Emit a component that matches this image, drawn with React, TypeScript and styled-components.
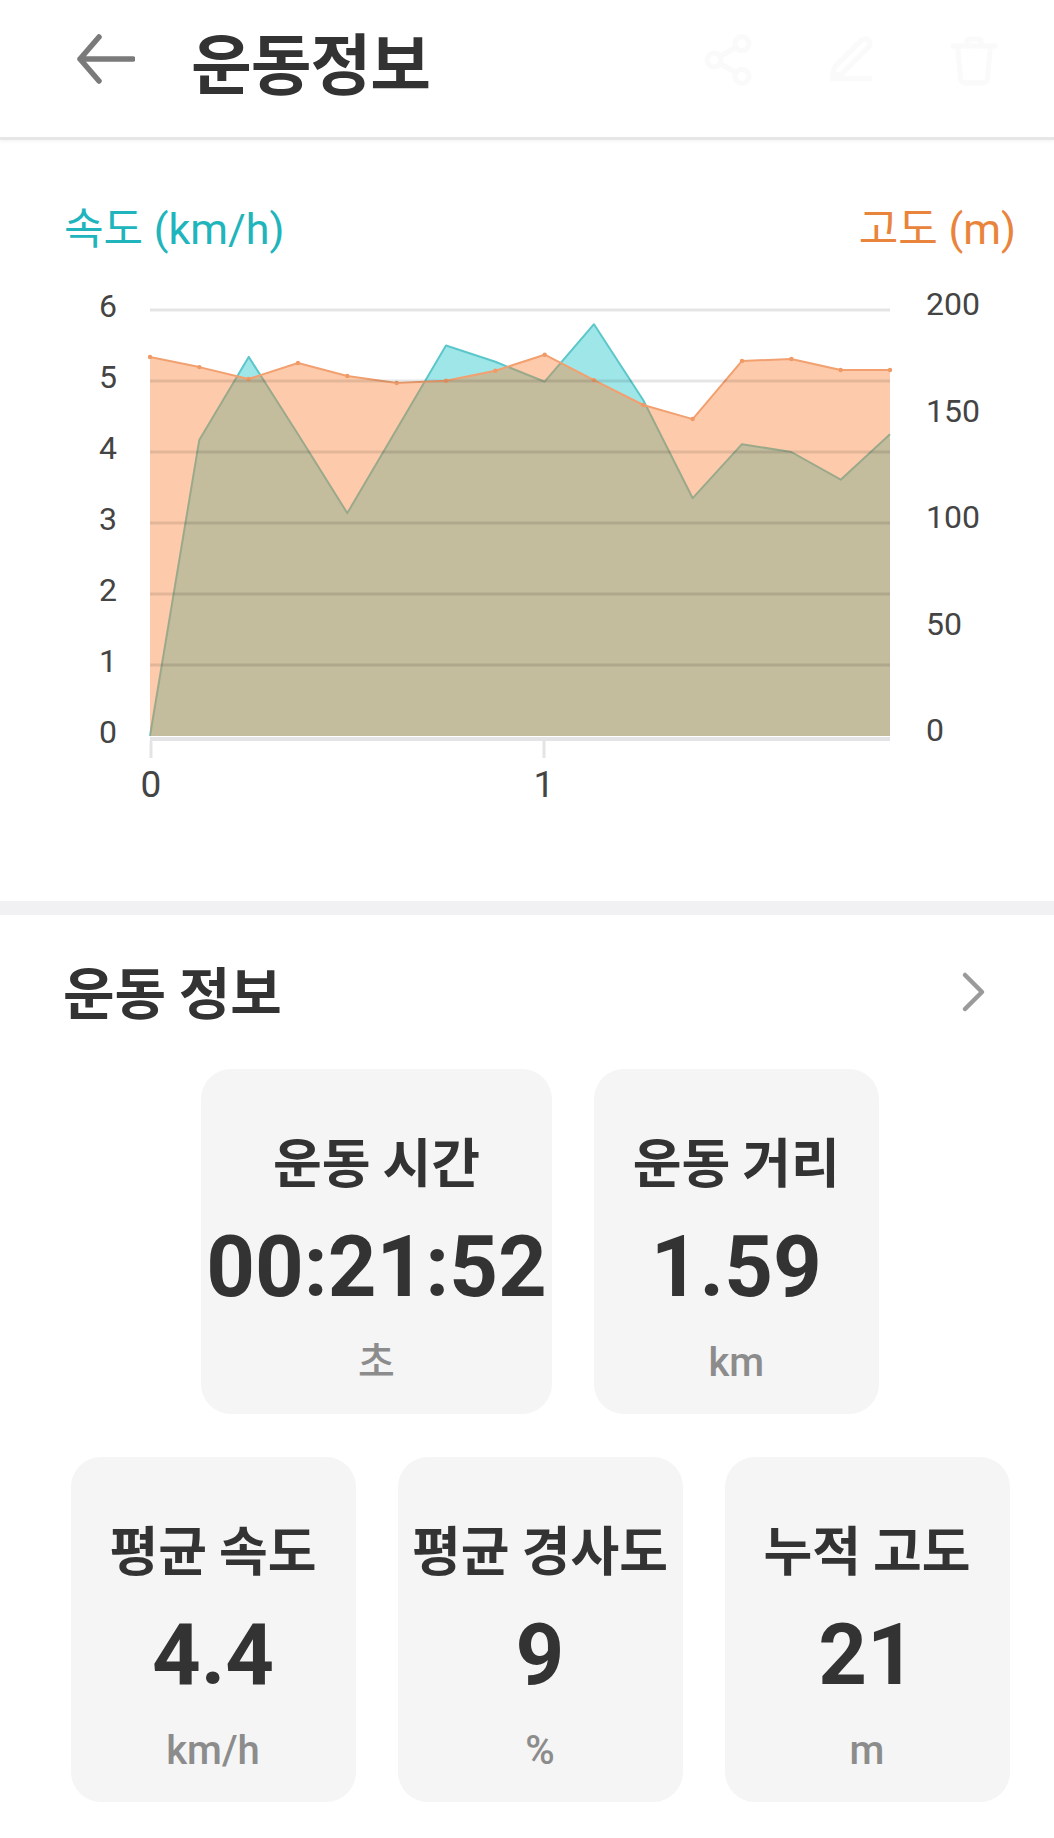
import React from "react";
import styled, { createGlobalStyle } from "styled-components";

const GlobalStyle = createGlobalStyle`
  html, body {
    margin: 0;
    padding: 0;
    background: #ffffff;
  }
  body {
    font-family: Roboto, "Noto Sans CJK KR", "Noto Sans", sans-serif;
    color: #333333;
  }
  * { box-sizing: border-box; }
`;

const Page = styled.div`
  width: 1054px;
  background: #ffffff;
`;

/* ---------- Header ---------- */
const Header = styled.header`
  height: 140px;
  display: flex;
  align-items: center;
  padding: 0 52px 12px 77px;
  border-bottom: 3px solid #e6e6e6;
  box-shadow: 0 2px 3px rgba(0, 0, 0, 0.04);
`;

const BackButton = styled.button`
  width: 58px;
  height: 50px;
  padding: 0;
  border: none;
  background: transparent;
  display: flex;
  align-items: center;
  justify-content: center;
  margin-top: -8px;
  cursor: pointer;
`;

const HeaderTitle = styled.h1`
  margin: -6px 0 0 56px;
  font-family: "Noto Sans CJK KR", sans-serif;
  font-size: 66px;
  line-height: 76px;
  font-weight: 700;
  color: #333333;
  letter-spacing: -1px;
`;

const HeaderActions = styled.div`
  margin-left: auto;
  display: flex;
  align-items: center;
  gap: 67px;
  margin-top: -6px;
`;

const GhostIcon = styled.svg`
  width: 56px;
  height: 56px;
  fill: none;
  stroke: #fafafa;
  stroke-width: 2.2;
  stroke-linecap: round;
  stroke-linejoin: round;
`;

/* ---------- Chart section ---------- */
const ChartSection = styled.section`
  padding: 64px 0 81px;
`;

const LegendRow = styled.div`
  height: 50px;
  margin-bottom: 26px;
  display: flex;
  align-items: center;
  justify-content: space-between;
  padding: 0 38px 0 64px;
`;

const LegendLabel = styled.span<{ $color: string }>`
  font-family: Roboto, "Noto Sans CJK KR", sans-serif;
  font-size: 43px;
  line-height: 50px;
  font-weight: 400;
  color: ${(p) => p.$color};
`;

const ChartSvg = styled.svg`
  display: block;
  width: 1054px;
  height: 540px;
`;

/* ---------- Info section ---------- */
const InfoSection = styled.section`
  border-top: 14px solid #f1f1f3;
  padding: 45px 0 36px;
`;

const InfoTitleRow = styled.div`
  height: 64px;
  display: flex;
  align-items: center;
  justify-content: space-between;
  padding: 0 66px 0 63px;
  margin-bottom: 45px;
`;

const InfoTitle = styled.h2`
  margin: -4px 0 0;
  font-family: "Noto Sans CJK KR", sans-serif;
  font-size: 56px;
  line-height: 64px;
  font-weight: 700;
  color: #333333;
`;

const CardGrid = styled.div`
  display: flex;
  flex-direction: column;
  gap: 43px;
  padding: 0 44px 0 70px;
`;

const CardRow = styled.div`
  display: flex;
  justify-content: center;
  gap: 42px;
`;

const Card = styled.div`
  min-width: 285px;
  height: 345px;
  padding: 60px 5px 28px;
  border-radius: 30px;
  background: #f5f5f5;
  display: flex;
  flex-direction: column;
  align-items: center;
`;

const CardTitle = styled.div`
  font-family: "Noto Sans CJK KR", sans-serif;
  font-size: 53px;
  line-height: 62px;
  font-weight: 600;
  color: #333333;
  white-space: nowrap;
`;

const CardValue = styled.div`
  margin-top: 26px;
  font-family: Roboto, sans-serif;
  font-size: 85px;
  line-height: 100px;
  font-weight: 700;
  color: #333333;
  white-space: nowrap;
`;

const CardUnit = styled.div`
  margin-top: 23px;
  font-family: Roboto, "Noto Sans CJK KR", sans-serif;
  font-size: 40px;
  line-height: 46px;
  font-weight: 500;
  color: #8c8c8c;
`;

/* ---------- Chart data ---------- */
const X0 = 150;
const X1 = 890;
const Y0 = 456;
const SPEED_UNIT = 71; // px per km/h
const ALT_UNIT = 2.13; // px per metre

const speed = [0, 4.17, 5.34, 4.25, 3.14, 4.32, 5.5, 5.27, 4.99, 5.8, 4.73, 3.35, 4.11, 4.0, 3.61, 4.25];
const altitude = [177.9, 173.2, 167.6, 175.1, 169, 165.7, 166.8, 171.5, 179, 167.1, 155.4, 148.8, 176.1, 177, 171.8, 171.8];

const xAt = (i: number, n: number) => X0 + ((X1 - X0) * i) / (n - 1);

const toPoints = (vals: number[], unit: number) =>
  vals.map((v, i) => [xAt(i, vals.length), Y0 - v * unit] as [number, number]);

const linePath = (pts: [number, number][]) =>
  pts.map((p, i) => `${i === 0 ? "M" : "L"}${p[0].toFixed(1)} ${p[1].toFixed(1)}`).join(" ");

const areaPath = (pts: [number, number][]) =>
  `${linePath(pts)} L${X1} ${Y0} L${X0} ${Y0} Z`;

const speedPts = toPoints(speed, SPEED_UNIT);
const altPts = toPoints(altitude, ALT_UNIT);

const leftTicks = [0, 1, 2, 3, 4, 5, 6];
const rightTicks = [0, 50, 100, 150, 200];

const Chart: React.FC = () => (
  <ChartSvg viewBox="0 0 1054 540">
    {/* speed area (teal) */}
    <path d={areaPath(speedPts)} fill="#9fe6e8" />
    <path d={linePath(speedPts)} fill="none" stroke="#5cc7ca" strokeWidth={2} strokeLinejoin="round" />
    {/* altitude area (orange, translucent) */}
    <path d={areaPath(altPts)} fill="rgba(250,125,45,0.4)" />
    <path d={linePath(altPts)} fill="none" stroke="#f2a070" strokeWidth={2} strokeLinejoin="round" />
    {altPts.map((p, i) => (
      <circle key={i} cx={p[0]} cy={p[1]} r={2.2} fill="#f09a66" />
    ))}
    {/* grid lines */}
    {leftTicks.slice(1).map((t) => (
      <line key={t} x1={X0} x2={X1} y1={Y0 - t * SPEED_UNIT} y2={Y0 - t * SPEED_UNIT} stroke="rgba(0,0,0,0.1)" strokeWidth={3} />
    ))}
    {/* x axis */}
    <line x1={X0} x2={X1} y1={459} y2={459} stroke="#e4e4e6" strokeWidth={4} />
    <line x1={X0 + 1} x2={X0 + 1} y1={461} y2={478} stroke="#e4e4e6" strokeWidth={3} />
    <line x1={544} x2={544} y1={461} y2={478} stroke="#e4e4e6" strokeWidth={3} />
    {/* left axis labels */}
    {leftTicks.map((t) => (
      <text key={t} x={117} y={Y0 - t * SPEED_UNIT + 6.5} textAnchor="end" fontFamily="Roboto, sans-serif" fontSize={32} fill="#444444">
        {t}
      </text>
    ))}
    {/* right axis labels */}
    {rightTicks.map((t) => (
      <text key={t} x={926} y={Y0 - t * ALT_UNIT + 5} textAnchor="start" fontFamily="Roboto, sans-serif" fontSize={32} fill="#444444">
        {t}
      </text>
    ))}
    {/* x axis labels */}
    <text x={X0 + 1} y={517} textAnchor="middle" fontFamily="Roboto, sans-serif" fontSize={37} fill="#444444">0</text>
    <text x={544} y={517} textAnchor="middle" fontFamily="Roboto, sans-serif" fontSize={37} fill="#444444">1</text>
  </ChartSvg>
);

/* ---------- Icons ---------- */
const BackArrow = () => (
  <svg width="58" height="50" viewBox="0 0 58 50">
    <path d="M22 3 L3 25 L22 47 M3 25 H56" fill="none" stroke="#7a7a7a" strokeWidth={5.5} strokeLinecap="round" strokeLinejoin="round" />
  </svg>
);

const Chevron = () => (
  <svg width="28" height="42" viewBox="0 0 28 42">
    <path d="M5 4 L22 21 L5 38" fill="none" stroke="#9a9a9a" strokeWidth={4.5} strokeLinecap="round" strokeLinejoin="round" />
  </svg>
);

type Stat = { title: string; value: string; unit: string };

const row1: Stat[] = [
  { title: "운동 시간", value: "00:21:52", unit: "초" },
  { title: "운동 거리", value: "1.59", unit: "km" },
];
const row2: Stat[] = [
  { title: "평균 속도", value: "4.4", unit: "km/h" },
  { title: "평균 경사도", value: "9", unit: "%" },
  { title: "누적 고도", value: "21", unit: "m" },
];

const StatCard: React.FC<Stat> = ({ title, value, unit }) => (
  <Card>
    <CardTitle>{title}</CardTitle>
    <CardValue>{value}</CardValue>
    <CardUnit>{unit}</CardUnit>
  </Card>
);

export default function App() {
  return (
    <Page>
      <GlobalStyle />
      <Header>
        <BackButton aria-label="뒤로">
          <BackArrow />
        </BackButton>
        <HeaderTitle>운동정보</HeaderTitle>
        <HeaderActions>
          <GhostIcon viewBox="0 0 24 24">
            <circle cx="18" cy="5" r="3" />
            <circle cx="6" cy="12" r="3" />
            <circle cx="18" cy="19" r="3" />
            <line x1="8.6" y1="13.5" x2="15.4" y2="17.5" />
            <line x1="15.4" y1="6.5" x2="8.6" y2="10.5" />
          </GhostIcon>
          <GhostIcon viewBox="0 0 24 24">
            <path d="M4 20h16" />
            <path d="M16.5 3.5a2.1 2.1 0 0 1 3 3L8 18l-4 1 1-4Z" />
          </GhostIcon>
          <GhostIcon viewBox="0 0 24 24">
            <path d="M3 6h18" />
            <path d="M19 6l-1.2 14a2 2 0 0 1-2 1.8H8.2a2 2 0 0 1-2-1.8L5 6" />
            <path d="M9 6V4a1 1 0 0 1 1-1h4a1 1 0 0 1 1 1v2" />
          </GhostIcon>
        </HeaderActions>
      </Header>

      <ChartSection>
        <LegendRow>
          <LegendLabel $color="#20b4bc">속도 (km/h)</LegendLabel>
          <LegendLabel $color="#e9843d">고도 (m)</LegendLabel>
        </LegendRow>
        <Chart />
      </ChartSection>

      <InfoSection>
        <InfoTitleRow>
          <InfoTitle>운동 정보</InfoTitle>
          <Chevron />
        </InfoTitleRow>
        <CardGrid>
          <CardRow>
            {row1.map((s) => (
              <StatCard key={s.title} {...s} />
            ))}
          </CardRow>
          <CardRow>
            {row2.map((s) => (
              <StatCard key={s.title} {...s} />
            ))}
          </CardRow>
        </CardGrid>
      </InfoSection>
    </Page>
  );
}
